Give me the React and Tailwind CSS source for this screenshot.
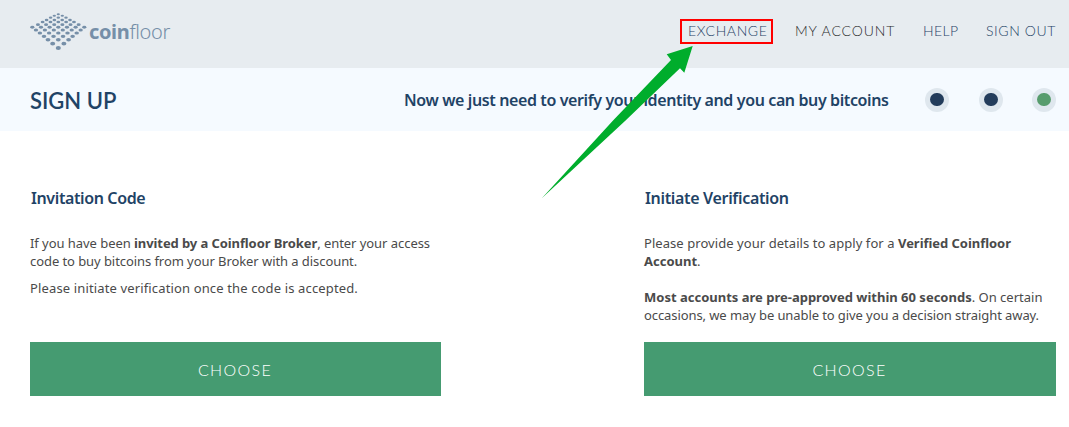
import React from 'react';

// perspective of the logo floor: y and horizontal step of every row of dots
const rowY = [14.3, 15.8, 17.7, 20, 22, 24.7, 27.3, 30, 33, 36.3, 39.7, 43.7, 48];
const rowStep = [4, 4, 3.85, 3.9, 3.92, 4.07, 4.33, 4.47, 4.6, 4.77, 5.15, 5.6, 5.6];

function Logo() {
    const dots = [];
    for (let a = 0; a < 7; a++) {
        for (let b = 0; b < 7; b++) {
            const s = a + b;
            dots.push(
                <ellipse
                    key={a + '-' + b}
                    cx={28.3 + (a - b) * rowStep[s]}
                    cy={rowY[s] - 12}
                    rx={1.6 + s * 0.08}
                    ry={0.95 + s * 0.08}
                />
            );
        }
    }
    return (
        <div className="flex items-center text-[#768fa8]">
            <svg width="58" height="40" viewBox="0 0 58 40" fill="currentColor">
                {dots}
            </svg>
            <span className="pl-px font-['Noto_Sans'] text-[20px] leading-[24px] tracking-[-0.35px] whitespace-nowrap">
                <span className="font-bold">coin</span>
                <span className="font-light">floor</span>
            </span>
        </div>
    );
}

function Step({ color }) {
    return (
        <span className="flex size-6 items-center justify-center rounded-full bg-[#dfe7ee]">
            <span className={'h-[13px] w-[14px] rounded-full ' + color}></span>
        </span>
    );
}

function Choose() {
    return (
        <button className="h-[54px] w-full bg-[#459b71] pt-[2px] pr-px font-['Lato'] text-[16px] font-light tracking-[1.35px] text-white">
            CHOOSE
        </button>
    );
}

function App() {
    return (
        <div className="relative h-[427px] w-[1069px] overflow-hidden bg-white font-['Noto_Sans',sans-serif] text-[#4a4a4a]">
            <header className="flex h-[68px] items-start justify-between bg-[#e7ecf0] pt-3 pl-[30px]">
                <Logo />
                <nav className="flex pt-[7px] font-['Lato'] text-[14px] leading-[23px] font-light whitespace-nowrap text-[#1f4366]">
                    <a className="h-[25px] w-[93px] border-2 border-[#ff0000] pl-[6px] leading-[19px] tracking-[0.6px]">EXCHANGE</a>
                    <a className="ml-[22px] w-[128px] tracking-[0.9px] text-[#2b2b2b]">MY ACCOUNT</a>
                    <a className="w-[63px] tracking-[0.4px]">HELP</a>
                    <a className="w-[83px] tracking-[0.6px]">SIGN OUT</a>
                </nav>
            </header>

            <section className="flex h-[63px] items-center bg-[#f5faff] pr-[13px] pl-[30px] text-[#1f4366]">
                <h1 className="w-[374px] pt-[2px] font-['Lato'] text-[22px] font-semibold">SIGN UP</h1>
                <p className="w-[521px] text-[16px] font-semibold tracking-[-0.385px] whitespace-nowrap">
                    Now we just need to verify your identity and you can buy bitcoins
                </p>
                <div className="flex gap-[29.5px]">
                    <Step color="bg-[#233c5b]" />
                    <Step color="bg-[#233c5b]" />
                    <Step color="bg-[#579c6d]" />
                </div>
            </section>

            <main className="flex justify-between pt-[55px] pr-[13px] pl-[30px] text-[13px] leading-[18px] whitespace-nowrap">
                <div className="w-[411px]">
                    <h2 className="pl-px text-[16px] leading-6 font-semibold tracking-[-0.38px] text-[#1f4366]">Invitation Code</h2>
                    <div className="mt-6 h-[108px]">
                        <p className="tracking-[-0.05px]">If you have been <b className="tracking-[-0.09px]">invited by a Coinfloor Broker</b>, enter your access</p>
                        <p className="tracking-[-0.07px]">code to buy bitcoins from your Broker with a discount.</p>
                        <p className="mt-[9px] tracking-[0.14px]">Please initiate verification once the code is accepted.</p>
                    </div>
                    <Choose />
                </div>
                <div className="w-[412px]">
                    <h2 className="pl-px text-[16px] leading-6 font-semibold tracking-[-0.33px] text-[#1f4366]">Initiate Verification</h2>
                    <div className="mt-6 h-[108px]">
                        <p className="tracking-[0.06px]">Please provide your details to apply for a <b className="tracking-[-0.04px]">Verified Coinfloor</b></p>
                        <p><b>Account</b>.</p>
                        <p className="mt-[18px]"><b>Most accounts are pre-approved within 60 seconds</b>. On certain</p>
                        <p className="tracking-[-0.09px]">occasions, we may be unable to give you a decision straight away.</p>
                    </div>
                    <Choose />
                </div>
            </main>

            {/* arrow pointing at the exchange link */}
            <svg className="absolute top-[45px] left-[541px]" width="154" height="155" viewBox="541 45 154 155">
                <path d="M692.7 46 L666.7 54.3 L671 60 L613.5 120 L541.8 198.2 L625 121 L680 68.3 L684.3 72.7 Z" fill="#00ad2c" />
            </svg>
        </div>
    );
}

export default App;
